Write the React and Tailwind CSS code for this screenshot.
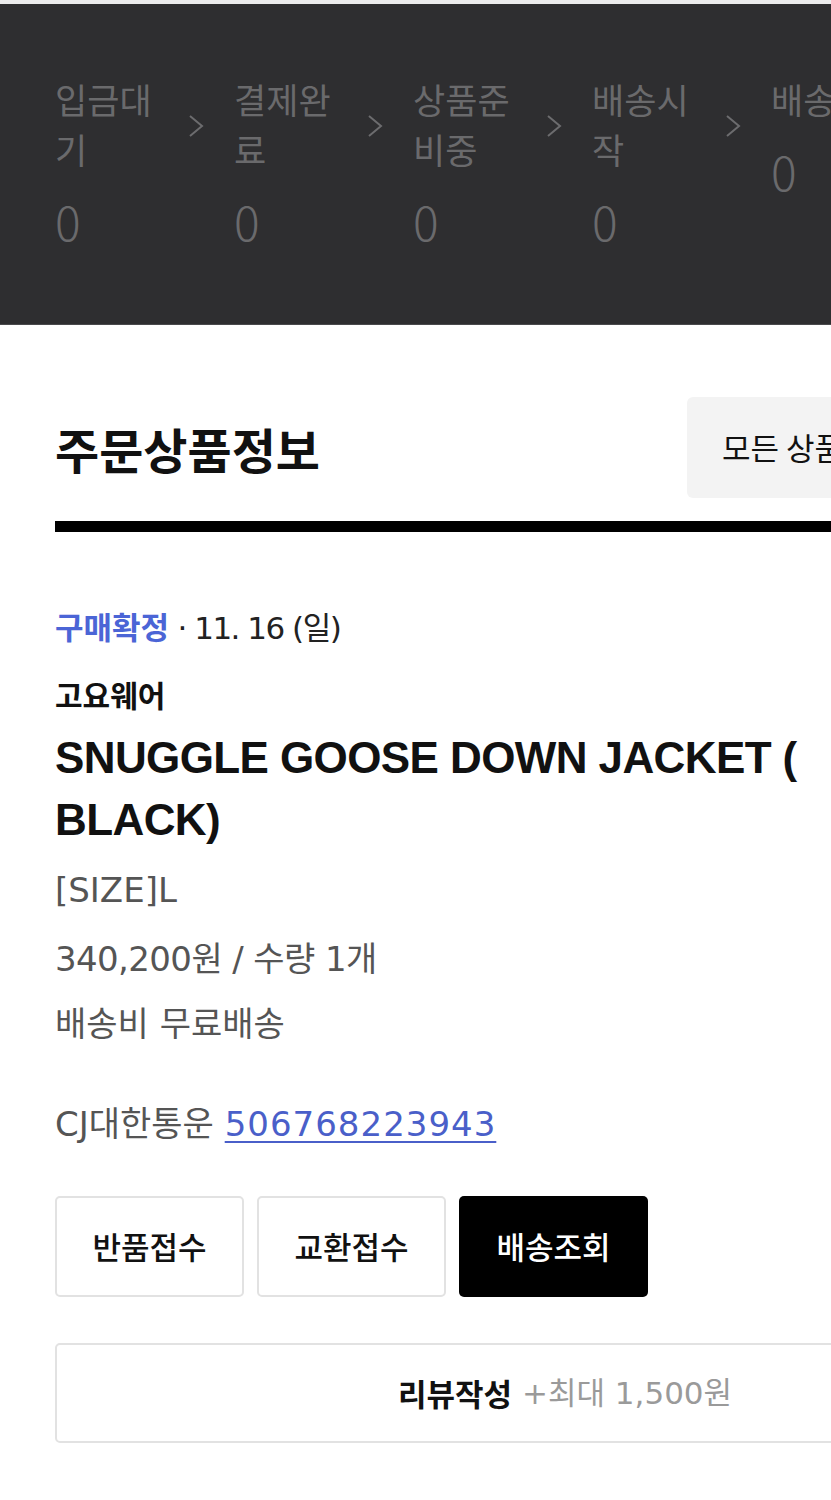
import React from "react";

const FONT = "font-['Liberation_Sans','Noto_Sans_CJK_KR',sans-serif]";
const BODY = "font-['DejaVu_Sans','Noto_Sans_CJK_KR',sans-serif]";
const KR = "font-['Noto_Sans_CJK_KR',sans-serif]";

function Chevron() {
  return (
    <svg width="16" height="24" viewBox="0 0 16 24" className="mt-[40px] mr-[30px] shrink-0" fill="none">
      <path d="M2 2 L14 12 L2 22" stroke="#6c6c6e" strokeWidth="2" />
    </svg>
  );
}

function Step({ label, wide }) {
  return (
    <div className={wide ? "shrink-0 whitespace-nowrap" : "w-[133px] shrink-0"}>
      <div className={"text-[35px] leading-[50px] text-[#6a6a6c] " + KR + " " + (wide ? "" : "w-[110px]")}>
        {label}
      </div>
      <div className={"mt-[21px] text-[48px] leading-[50px] font-light text-[#6a6a6c] " + KR}>
        0
      </div>
    </div>
  );
}

export default function App() {
  return (
    <div className={"w-[831px] overflow-hidden bg-white " + FONT}>
      <div className="h-[4px] bg-[#ececec]" />
      <div className="h-[321px] bg-[#2e2e30] border-b border-[#4a4a4c] pl-[55px] pt-[70px]">
        <div className="flex items-start">
          <Step label="입금대기" />
          <Chevron />
          <Step label="결제완료" />
          <Chevron />
          <Step label="상품준비중" />
          <Chevron />
          <Step label="배송시작" />
          <Chevron />
          <Step label="배송완료" wide />
        </div>
      </div>

      <div className="pl-[55px] w-[1130px]">
        <div className="mt-[72px] flex items-center h-[101px] w-[1020px]">
          <h2 className={"text-[48px] font-bold text-[#111] " + KR}>주문상품정보</h2>
          <div className={"ml-auto h-[101px] w-[388px] rounded-[6px] bg-[#f3f3f3] flex items-center pl-[35px] text-[31px] text-[#111] " + KR}>
            모든 상품 배송조회
          </div>
        </div>
        <div className="mt-[23px] h-[11px] w-[1020px] bg-black" />

        <div className={"mt-[74px] leading-[40px] text-[31px] text-[#222] " + BODY}>
          <span className={"font-bold text-[#4b65d6] " + KR}>구매확정</span>
          <span className="tracking-[-1.5px]"> · 11. 16 (일)</span>
        </div>
        <div className={"mt-[26px] leading-[40px] text-[30px] font-bold text-[#111] " + KR}>
          고요웨어
        </div>
        <div className="mt-[13px] w-[770px] text-[44px] leading-[62px] font-bold tracking-[-0.6px] text-[#111]">
          SNUGGLE GOOSE DOWN JACKET ( BLACK)
        </div>
        <div className={"mt-[19px] leading-[40px] text-[34px] text-[#555] " + BODY}>[SIZE]L</div>
        <div className={"mt-[29px] leading-[40px] text-[34px] tracking-[-0.6px] text-[#555] " + BODY}>340,200원 / 수량 1개</div>
        <div className={"mt-[25px] leading-[40px] text-[34px] text-[#555] " + BODY}>배송비 무료배송</div>
        <div className={"mt-[60px] leading-[40px] text-[34px] text-[#555] " + BODY}>
          CJ대한통운{" "}
          <span className="text-[#4a5fc9] underline decoration-[2px] underline-offset-[5px] tracking-[1px]">506768223943</span>
        </div>

        <div className="mt-[52px] flex gap-[13px]">
          <div className={"h-[101px] w-[189px] rounded-[5px] border-2 border-[#e2e2e2] flex items-center justify-center text-[31px] font-medium text-[#111] " + KR}>
            반품접수
          </div>
          <div className={"h-[101px] w-[189px] rounded-[5px] border-2 border-[#e2e2e2] flex items-center justify-center text-[31px] font-medium text-[#111] " + KR}>
            교환접수
          </div>
          <div className={"h-[101px] w-[189px] rounded-[5px] bg-black flex items-center justify-center text-[31px] font-medium text-white " + KR}>
            배송조회
          </div>
        </div>

        <div className={"mt-[46px] h-[100px] w-[1020px] rounded-[5px] border-2 border-[#e2e2e2] flex items-center justify-center text-[31px] " + BODY}>
          <span className={"font-bold text-[#111] " + KR}>리뷰작성</span>
          <span className="ml-[10px] text-[#9a9a9a]">+최대 1,500원</span>
        </div>

        <div className="mt-[57px] h-[2px] w-[1020px] bg-[#222]" />
      </div>
    </div>
  );
}
